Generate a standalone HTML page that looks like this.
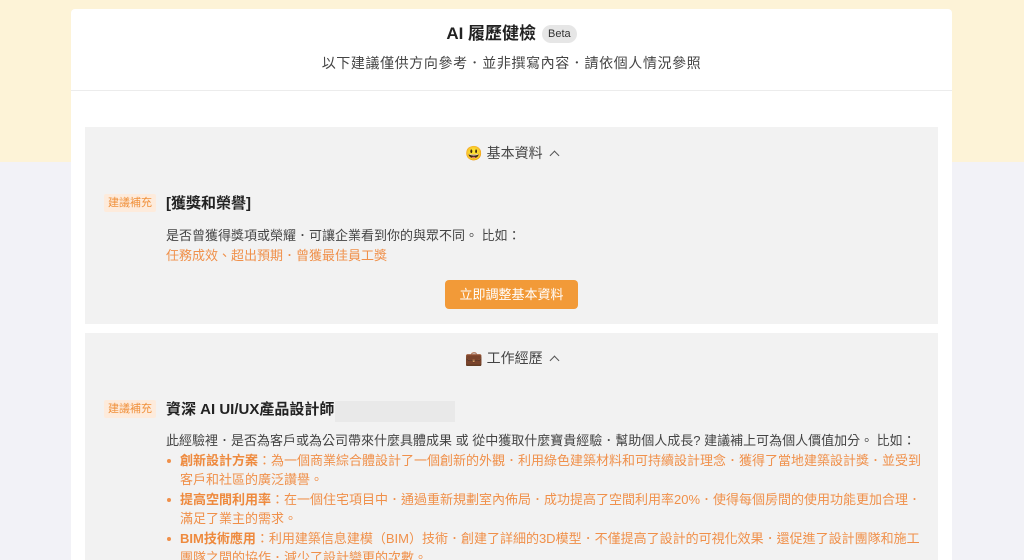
<!DOCTYPE html>
<html><head><meta charset="utf-8"><style>
*{margin:0;padding:0;box-sizing:border-box}
html,body{width:1024px;height:560px;overflow:hidden}
body{background:#f2f2f7;font-family:"Liberation Sans","Noto Sans CJK TC",sans-serif;position:relative}
.top{position:absolute;left:0;top:0;width:1024px;height:162px;background:#fdf3d7}
.card{position:absolute;left:71px;top:9px;width:881px;height:551px;background:#fff;border-radius:4px 4px 0 0;overflow:hidden}
.hd{height:82px;border-bottom:1px solid #ececec;text-align:center}
.t{padding-top:13px;font-size:17px;font-weight:bold;color:#222;height:42px;line-height:24px}
.beta{display:inline-block;background:#e6e6e6;color:#333;font-size:11px;font-weight:normal;border-radius:9px;padding:0 6px;line-height:18px;vertical-align:2px;margin-left:6px}
.sub{font-size:14px;color:#444;line-height:24px;letter-spacing:0.6px}
.sec{position:absolute;left:14px;width:853px;background:#f2f2f2}
.sh{text-align:center;font-size:14px;color:#444;position:absolute;width:100%}
.chev{display:inline-block;width:7px;height:7px;border-left:1.3px solid #555;border-top:1.3px solid #555;transform:rotate(45deg);margin-left:8px;vertical-align:-1px}
.tag{position:absolute;left:19px;background:#fdebdc;color:#f0903a;font-size:11px;padding:0 4px;line-height:18px;border-radius:2px}
.tt{position:absolute;left:81px;font-size:15px;font-weight:bold;color:#222;line-height:20px}
.d{position:absolute;left:81px;font-size:13px;color:#444;line-height:19.5px;width:760px;white-space:nowrap}
.o{color:#f0904a}
.btn{position:absolute;left:360px;top:153px;width:133px;height:29px;background:#f29a38;color:#fff;border-radius:4px;font-size:13px;text-align:center;line-height:29px}
ul{list-style:none}
li{position:relative;padding-left:14px;color:#f0904a;white-space:nowrap}
li:before{content:"";position:absolute;left:1px;top:8px;width:4px;height:4px;border-radius:2px;background:#f0904a}
b{font-weight:bold;color:#ee8a3e}
</style></head><body>
<div class="top"></div>
<div class="card">
<div class="hd"><div class="t">AI 履歷健檢<span class="beta">Beta</span></div><div class="sub">以下建議僅供方向參考．並非撰寫內容．請依個人情況參照</div></div>
<div class="sec" style="top:118px;height:197px">
<div class="sh" style="top:16px">😃 基本資料<span class="chev"></span></div>
<div class="tag" style="top:67px">建議補充</div>
<div class="tt" style="top:67px">[獲獎和榮譽]</div>
<div class="d" style="top:99px">是否曾獲得獎項或榮耀．可讓企業看到你的與眾不同。 比如：<br><span class="o">任務成效、超出預期．曾獲最佳員工獎</span></div>
<div class="btn">立即調整基本資料</div>
</div>
<div class="sec" style="top:324px;height:300px">
<div class="sh" style="top:15px">💼 工作經歷<span class="chev"></span></div>
<div class="tag" style="top:67px">建議補充</div>
<div class="tt" style="top:67px">資深 AI UI/UX產品設計師</div>
<div style="position:absolute;left:250px;top:68px;width:120px;height:21px;background:#e9e9e9"></div>
<div class="d" style="top:98px">此經驗裡．是否為客戶或為公司帶來什麼具體成果 或 從中獲取什麼寶貴經驗．幫助個人成長? 建議補上可為個人價值加分。 比如：
<ul>
<li><b>創新設計方案</b>：為一個商業綜合體設計了一個創新的外觀．利用綠色建築材料和可持續設計理念．獲得了當地建築設計獎．並受到<br>客戶和社區的廣泛讚譽。</li>
<li><b>提高空間利用率</b>：在一個住宅項目中．通過重新規劃室內佈局．成功提高了空間利用率20%．使得每個房間的使用功能更加合理．<br>滿足了業主的需求。</li>
<li><b>BIM技術應用</b>：利用建築信息建模（BIM）技術．創建了詳細的3D模型．不僅提高了設計的可視化效果．還促進了設計團隊和施工<br>團隊之間的協作．減少了設計變更的次數。</li>
</ul></div>
</div>
</div>
</body></html>
